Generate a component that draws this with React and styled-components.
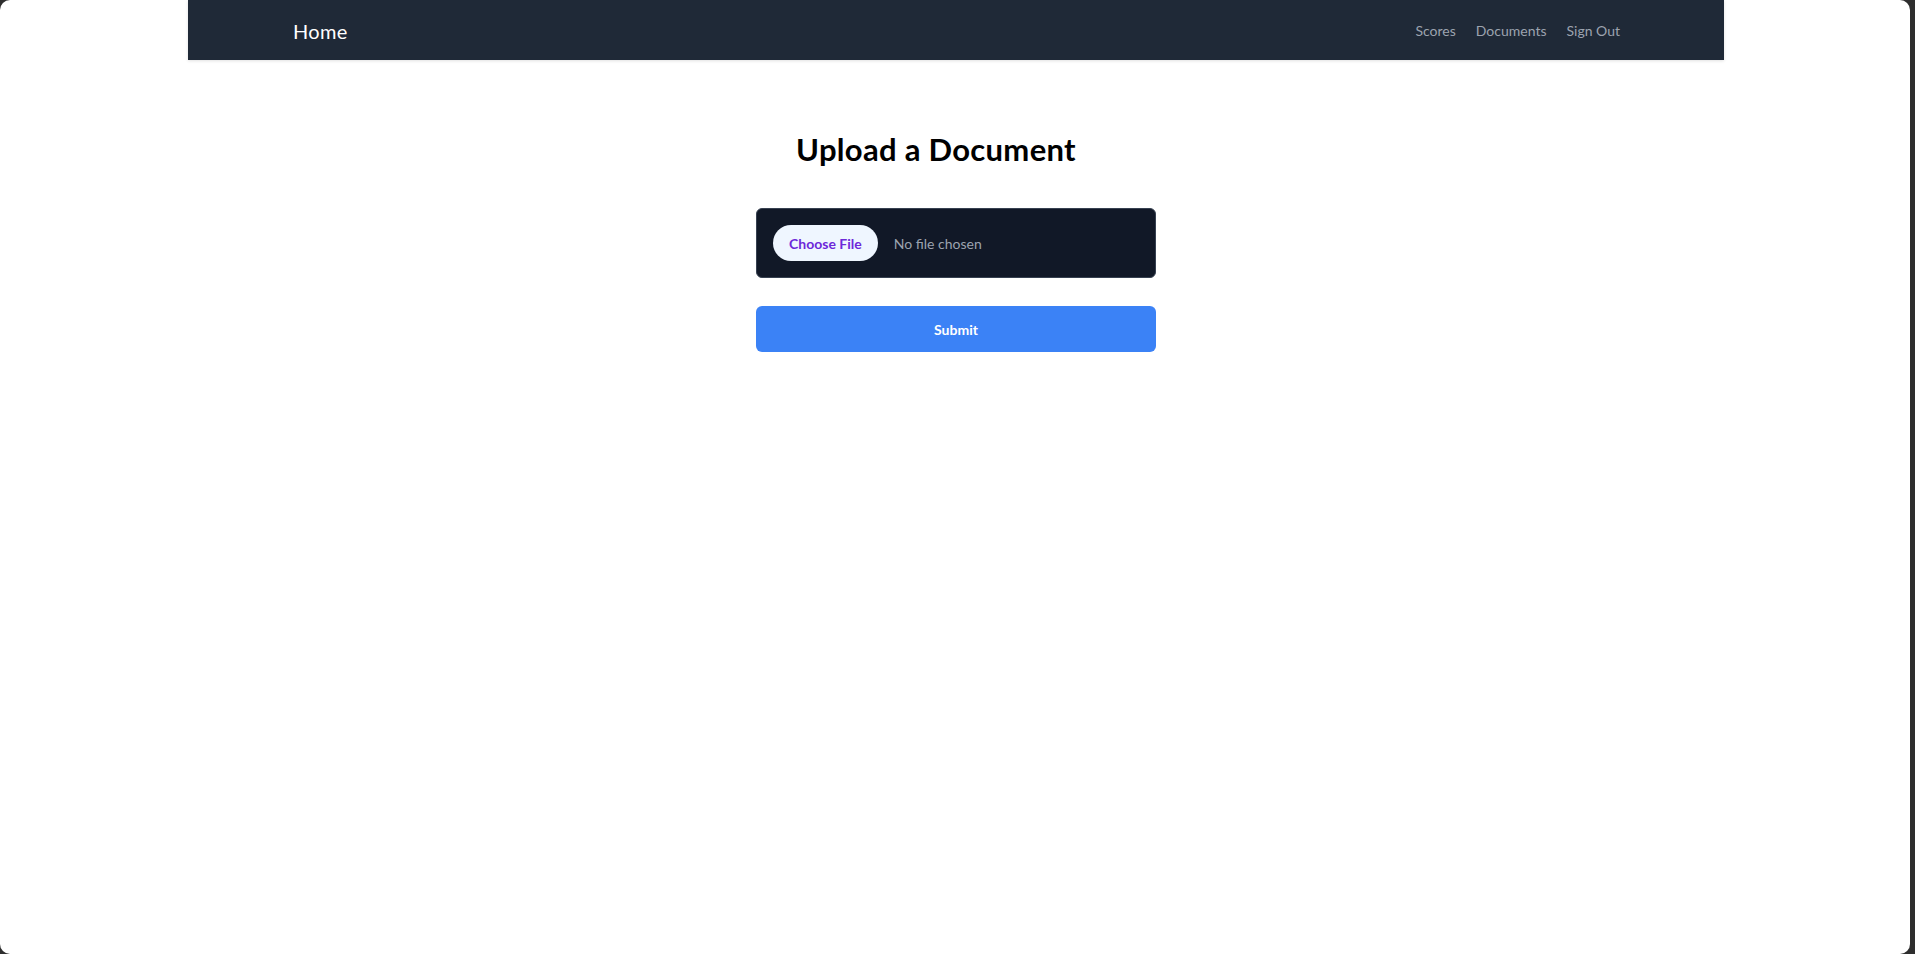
import React from 'react';
import styled, { createGlobalStyle } from 'styled-components';

const GlobalStyle = createGlobalStyle`
  html, body {
    margin: 0;
    padding: 0;
    background: #2e2e2e;
    font-family: Lato, "Noto Sans", sans-serif;
  }
  * {
    box-sizing: border-box;
  }
`;

const Frame = styled.div`
  width: 1910px;
  height: 954px;
  padding-left: 2px;
  background: #ffffff;
  border-radius: 10px;
  overflow: hidden;
`;

const NavBar = styled.nav`
  max-width: 1536px;
  height: 60px;
  margin: 0 auto;
  background: #1f2937;
  display: flex;
  align-items: center;
  justify-content: space-between;
  padding: 0 104px 0 105px;
  box-shadow: 0 1px 3px rgba(0, 0, 0, 0.12);
`;

const Brand = styled.a`
  color: #ffffff;
  font-size: 20px;
  letter-spacing: 0.3px;
  text-decoration: none;
  margin-top: 2px;
`;

const NavLinks = styled.div`
  display: flex;
  gap: 20px;
`;

const NavLink = styled.a`
  color: #9ca3af;
  font-size: 14px;
  text-decoration: none;
`;

const Main = styled.main`
  display: flex;
  flex-direction: column;
  align-items: center;
  padding-top: 71px;
`;

const Title = styled.h1`
  margin: 0 40px 41px 0;
  font-size: 31px;
  letter-spacing: 0.3px;
  line-height: 36px;
  font-weight: 700;
  color: #000000;
`;

const Form = styled.form`
  width: 400px;
  display: flex;
  flex-direction: column;
  gap: 28px;
`;

const FileBox = styled.div`
  background: #111827;
  border: 1px solid #374151;
  border-radius: 6px;
  padding: 16px;
  display: flex;
  align-items: center;
`;

const FileInput = styled.input`
  font-family: Lato, "Noto Sans", sans-serif;
  font-size: 14px;
  color: #9ca3af;

  &::file-selector-button {
    height: 36px;
    padding: 0 16px;
    margin-right: 16px;
    border: none;
    border-radius: 9999px;
    background: #eff6ff;
    color: #6d28d9;
    font-family: Lato, "Noto Sans", sans-serif;
    font-size: 14px;
    font-weight: 700;
    cursor: pointer;
  }
`;

const SubmitButton = styled.button`
  height: 46px;
  border: none;
  border-radius: 6px;
  background: #3b82f6;
  color: #ffffff;
  font-family: Lato, "Noto Sans", sans-serif;
  font-size: 14px;
  font-weight: 700;
  cursor: pointer;
`;

const App = () => {
  return (
    <Frame>
      <GlobalStyle />
      <NavBar>
        <Brand href="#">Home</Brand>
        <NavLinks>
          <NavLink href="#">Scores</NavLink>
          <NavLink href="#">Documents</NavLink>
          <NavLink href="#">Sign Out</NavLink>
        </NavLinks>
      </NavBar>
      <Main>
        <Title>Upload a Document</Title>
        <Form onSubmit={(e) => e.preventDefault()}>
          <FileBox>
            <FileInput type="file" />
          </FileBox>
          <SubmitButton type="submit">Submit</SubmitButton>
        </Form>
      </Main>
    </Frame>
  );
};

export default App;
